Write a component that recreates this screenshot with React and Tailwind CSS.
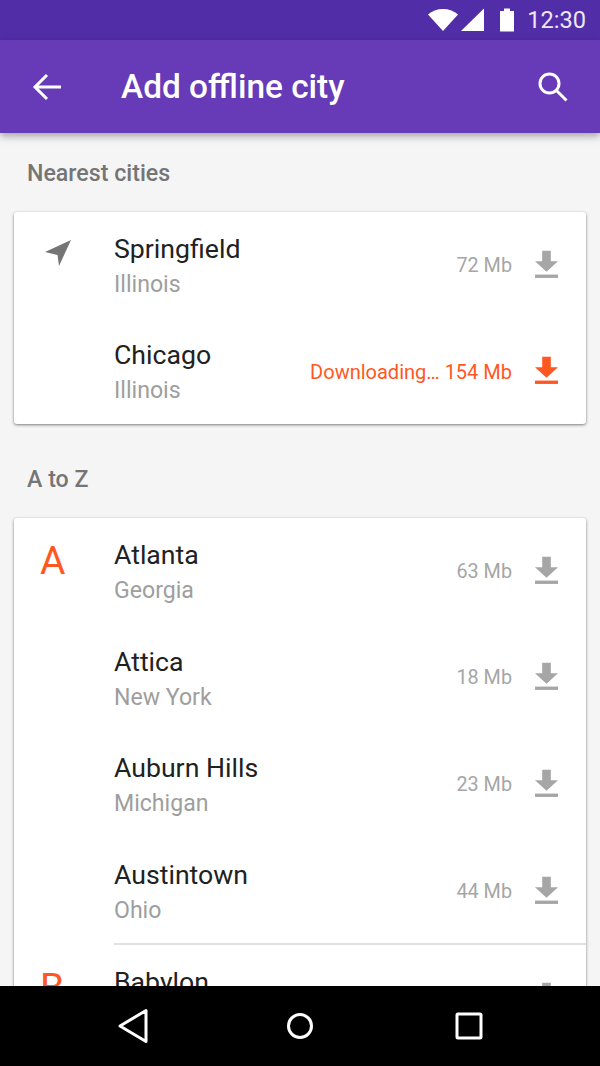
const Download = ({ className }) => (
  <svg viewBox="0 0 24 30" className={className} fill="currentColor">
    <path d="M7.5 0h9v11H24L12 22 0 11h7.5z" />
    <path d="M0 25h24v3.5H0z" />
  </svg>
);

const Row = ({ name, region, size, active, letter, icon, divider, short }) => (
  <div className={`relative flex items-start ${short ? "h-[106px]" : "h-[106.67px]"}`}>
    <div className="w-[100px] shrink-0">
      {letter && (
        <p className="pl-[26px] pt-[16px] text-[39px] leading-[54px] text-[#ff5722]">{letter}</p>
      )}
      {icon}
    </div>
    <div className="flex-1 pt-[20px]">
      <p className="text-[26.67px] leading-[35px] text-[#212121]">{name}</p>
      <p className="mt-[1px] text-[23.1px] leading-[34px] text-[#9e9e9e]">{region}</p>
    </div>
    <div className={`flex items-center pt-[34.6px] ${active ? "text-[#ff5722]" : "text-[#a6a6a6]"}`}>
      <p className={`mt-[2px] leading-[34px] ${active ? "text-[20px]" : "text-[19.8px]"}`}>
        {active ? "Downloading… " : ""}{size}
      </p>
      <Download className="ml-[23px] mr-[28px] h-[30px] w-[23px]" />
    </div>
    {divider && <div className="absolute bottom-0 left-[100px] right-0 h-[2px] bg-[#e0e0e0]" />}
  </div>
);

const SectionTitle = ({ children, className }) => (
  <p className={`pl-[27px] text-[23.2px] font-medium leading-[32px] text-[#757575] ${className}`}>{children}</p>
);

const Card = ({ children }) => (
  <div className="mx-[14px] rounded-[3px] bg-white shadow-[0_1px_3px_rgba(0,0,0,0.5)]">{children}</div>
);

export default function App() {
  return (
    <div className="flex h-[1066px] w-[600px] flex-col overflow-hidden bg-[#f5f5f5] font-['Roboto',sans-serif]">
      {/* Status bar */}
      <div className="flex h-[40px] shrink-0 items-center justify-end bg-[#512da8] pr-[14px] text-white">
        <svg width="30" height="24" viewBox="0 0 30 24" fill="currentColor" className="mr-[3px]">
          <path d="M0 6.5C4 3 9 1 15 1s11 2 15 5.5L15 23z" />
        </svg>
        <svg width="24" height="24" viewBox="0 0 24 24" fill="currentColor" className="mr-[14px]">
          <path d="M23 0.5V23H0z" />
        </svg>
        <svg width="16" height="24" viewBox="0 0 16 24" fill="currentColor" className="mr-[12px]">
          <path d="M1 3h4V0.5h6V3h4v20.5H1z" />
        </svg>
        <span className="text-[23.6px] leading-[32px] text-[#ede7f6]">12:30</span>
      </div>

      {/* App bar */}
      <div className="relative z-10 flex h-[93px] shrink-0 items-center bg-[#673ab7] text-white shadow-[0_3px_8px_rgba(0,0,0,0.35)]">
        <svg width="30" height="30" viewBox="0 0 30 30" fill="none" stroke="currentColor" strokeWidth="3" className="ml-[32px]">
          <path d="M29 15H3M15 3 3 15l12 12" />
        </svg>
        <h1 className="ml-[59px] flex-1 text-[33.4px] font-medium leading-[40px]">Add offline city</h1>
        <svg width="32" height="32" viewBox="0 0 32 32" fill="none" stroke="currentColor" strokeWidth="3" className="mr-[31px]">
          <circle cx="12.5" cy="12.5" r="9.5" />
          <path d="m19.5 19.5 10 10" />
        </svg>
      </div>

      {/* List */}
      <div className="min-h-0 flex-1 overflow-hidden">
        <SectionTitle className="pt-[24px] pb-[23px]">Nearest cities</SectionTitle>
        <Card>
          <Row
            short
            name="Springfield"
            region="Illinois"
            size="72 Mb"
            icon={
              <svg width="28" height="28" viewBox="0 0 28 28" fill="#757575" className="ml-[31px] mt-[28px]">
                <path d="M0 12 26 0 14 26l-1.5-11z" />
              </svg>
            }
          />
          <Row short name="Chicago" region="Illinois" size="154 Mb" active />
        </Card>
        <SectionTitle className="pt-[39px] pb-[23px]">A to Z</SectionTitle>
        <Card>
          <Row name="Atlanta" region="Georgia" size="63 Mb" letter="A" />
          <Row name="Attica" region="New York" size="18 Mb" />
          <Row name="Auburn Hills" region="Michigan" size="23 Mb" />
          <Row name="Austintown" region="Ohio" size="44 Mb" divider />
          <Row name="Babylon" region="New York" size="12 Mb" letter="B" />
        </Card>
      </div>

      {/* Nav bar */}
      <div className="flex h-[80px] shrink-0 items-center bg-black text-white">
        <div className="flex items-center gap-[137px] pl-[117px]">
          <svg width="32" height="36" viewBox="0 0 32 36" fill="none" stroke="currentColor" strokeWidth="3" strokeLinejoin="round">
            <path d="M29 2.5v31L3 18z" />
          </svg>
          <svg width="28" height="28" viewBox="0 0 28 28" fill="none" stroke="currentColor" strokeWidth="3">
            <circle cx="14" cy="14" r="11.5" />
          </svg>
          <svg width="28" height="28" viewBox="0 0 28 28" fill="none" stroke="currentColor" strokeWidth="3" strokeLinejoin="round" className="ml-[4px]">
            <rect x="2" y="2" width="24" height="24" rx="1" />
          </svg>
        </div>
      </div>
    </div>
  );
}
